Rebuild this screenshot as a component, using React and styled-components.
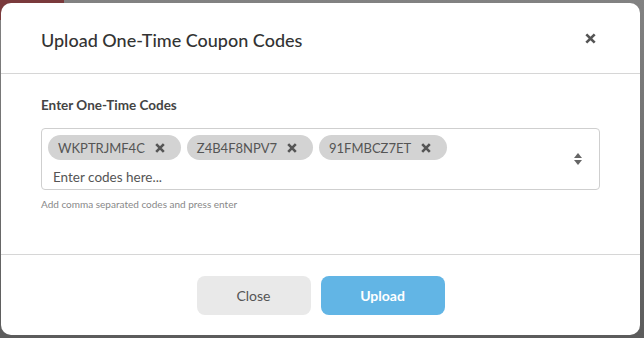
import React from 'react';
import styled, { createGlobalStyle } from 'styled-components';

const GlobalStyle = createGlobalStyle`
  html, body {
    margin: 0;
    padding: 0;
  }
  body {
    font-family: Lato, "Open Sans", sans-serif;
    background: #777;
  }
`;

const Backdrop = styled.div`
  position: relative;
  width: 644px;
  height: 338px;
  overflow: hidden;
  background: linear-gradient(#828282, #5c5c5c);
  box-sizing: border-box;
  padding: 3px 4px 3px 1px;
`;

const PageTab = styled.div`
  position: absolute;
  left: 0;
  top: 0;
  width: 64px;
  height: 20px;
  background: #7a3a3c;
  border-radius: 0 0 10px 0;
`;

const Modal = styled.div`
  position: relative;
  z-index: 1;
  height: 100%;
  background: #fff;
  border-radius: 10px;
  display: flex;
  flex-direction: column;
`;

const Header = styled.div`
  height: 70px;
  padding: 0 40px;
  display: flex;
  align-items: center;
  justify-content: space-between;
  border-bottom: 1px solid #d6d6d6;
`;

const Title = styled.h2`
  margin: 0;
  font-size: 18px;
  font-weight: 500;
  color: #333;
  padding-top: 3px;
`;

const CloseIcon = styled.button`
  border: none;
  background: none;
  padding: 0;
  width: 14px;
  height: 14px;
  margin-right: 3px;
  display: flex;
  align-items: center;
  justify-content: center;
  cursor: pointer;
`;

const Body = styled.div`
  flex: 1;
  padding: 23px 40px 0;
  border-bottom: 1px solid #d6d6d6;
`;

const Label = styled.div`
  font-size: 13.5px;
  font-weight: 700;
  color: #444;
  margin-bottom: 15px;
`;

const InputBox = styled.div`
  height: 62px;
  box-sizing: border-box;
  border: 1px solid #cfcfcf;
  border-radius: 4px;
  padding: 6px 40px 0 6px;
  position: relative;
`;

const ChipRow = styled.div`
  display: flex;
  gap: 6px;
`;

const Chip = styled.span`
  display: inline-flex;
  align-items: center;
  gap: 10px;
  height: 25px;
  padding: 0 16px 0 10px;
  border-radius: 13px;
  background: #d3d3d3;
  color: #555;
  font-size: 13px;
`;

const ChipX = styled.span`
  display: inline-flex;
  width: 10px;
  height: 10px;
`;

const Placeholder = styled.div`
  font-size: 13.5px;
  color: #555;
  padding: 9px 0 0 5px;
`;

const Arrows = styled.span`
  position: absolute;
  right: 17px;
  top: 50%;
  transform: translateY(-50%);
  display: flex;
  flex-direction: column;
  gap: 2px;
`;

const Help = styled.div`
  margin-top: 8px;
  font-size: 10px;
  color: #888;
`;

const Footer = styled.div`
  height: 80px;
  display: flex;
  align-items: center;
  justify-content: center;
  gap: 10px;
`;

const Button = styled.button`
  height: 39px;
  width: ${p => p.$w}px;
  border: none;
  border-radius: 8px;
  font-family: Lato, sans-serif;
  font-size: 14px;
  font-weight: ${p => (p.$primary ? 700 : 400)};
  color: ${p => (p.$primary ? '#fff' : '#555')};
  background: ${p => (p.$primary ? '#62b5e5' : '#e9e9e9')};
  cursor: pointer;
`;

const XMark = ({ size = 10, color = '#555', sw = 2.6 }) => (
  <svg width={size} height={size} viewBox="0 0 10 10">
    <path d="M1.2 1.2 L8.8 8.8 M8.8 1.2 L1.2 8.8" stroke={color} strokeWidth={sw} strokeLinecap="butt" />
  </svg>
);

const codes = ['WKPTRJMF4C', 'Z4B4F8NPV7', '91FMBCZ7ET'];

export default function App() {
  return (
    <>
      <GlobalStyle />
      <Backdrop>
        <PageTab />
        <Modal>
          <Header>
            <Title>Upload One-Time Coupon Codes</Title>
            <CloseIcon aria-label="close">
              <XMark size={11} color="#555" sw={2.4} />
            </CloseIcon>
          </Header>
          <Body>
            <Label>Enter One-Time Codes</Label>
            <InputBox>
              <ChipRow>
                {codes.map(c => (
                  <Chip key={c}>
                    {c}
                    <ChipX>
                      <XMark />
                    </ChipX>
                  </Chip>
                ))}
              </ChipRow>
              <Placeholder>Enter codes here...</Placeholder>
              <Arrows>
                <svg width="8" height="5" viewBox="0 0 8 5"><path d="M4 0 L8 5 L0 5 Z" fill="#666" /></svg>
                <svg width="8" height="5" viewBox="0 0 8 5"><path d="M0 0 L8 0 L4 5 Z" fill="#666" /></svg>
              </Arrows>
            </InputBox>
            <Help>Add comma separated codes and press enter</Help>
          </Body>
          <Footer>
            <Button $w={114}>Close</Button>
            <Button $w={124} $primary>Upload</Button>
          </Footer>
        </Modal>
      </Backdrop>
    </>
  );
}
